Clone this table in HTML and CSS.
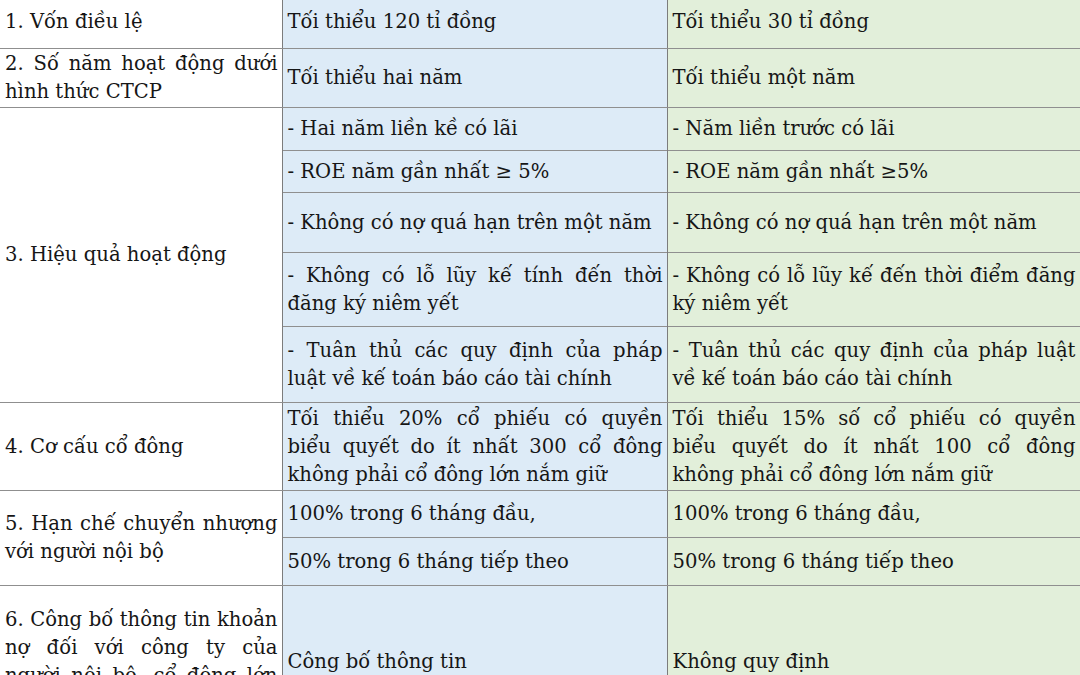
FILE: index.html
```html
<!DOCTYPE html>
<html lang="vi">
<head>
<meta charset="utf-8">
<title>Điều kiện niêm yết</title>
<link rel="stylesheet" href="styles.css">
</head>
<body>
<table class="cmp">
  <colgroup>
    <col class="c1"><col class="c2"><col class="c3">
  </colgroup>
  <tr class="r1">
    <td class="lab">1. Vốn điều lệ</td>
    <td class="hnx">Tối thiểu 120 tỉ đồng</td>
    <td class="upc">Tối thiểu 30 tỉ đồng</td>
  </tr>
  <tr class="r2">
    <td class="lab"><span class="jl">2. Số năm hoạt động dưới</span><span class="ln">hình thức CTCP</span></td>
    <td class="hnx">Tối thiểu hai năm</td>
    <td class="upc">Tối thiểu một năm</td>
  </tr>
  <tr class="r3a sub">
    <td class="lab" rowspan="5">3. Hiệu quả hoạt động</td>
    <td class="hnx">- Hai năm liền kề có lãi</td>
    <td class="upc">- Năm liền trước có lãi</td>
  </tr>
  <tr class="r3b sub">
    <td class="hnx">- ROE năm gần nhất ≥ 5%</td>
    <td class="upc">- ROE năm gần nhất ≥5%</td>
  </tr>
  <tr class="r3c sub">
    <td class="hnx">- Không có nợ quá hạn trên một năm</td>
    <td class="upc">- Không có nợ quá hạn trên một năm</td>
  </tr>
  <tr class="r3d sub">
    <td class="hnx"><span class="jl">- Không có lỗ lũy kế tính đến thời</span><span class="ln">đăng ký niêm yết</span></td>
    <td class="upc"><span class="jl">- Không có lỗ lũy kế đến thời điểm đăng</span><span class="ln">ký niêm yết</span></td>
  </tr>
  <tr class="r3e">
    <td class="hnx"><span class="jl">- Tuân thủ các quy định của pháp</span><span class="ln">luật về kế toán báo cáo tài chính</span></td>
    <td class="upc"><span class="jl">- Tuân thủ các quy định của pháp luật</span><span class="ln">về kế toán báo cáo tài chính</span></td>
  </tr>
  <tr class="r4">
    <td class="lab">4. Cơ cấu cổ đông</td>
    <td class="hnx"><span class="jl">Tối thiểu 20% cổ phiếu có quyền</span><span class="jl">biểu quyết do ít nhất 300 cổ đông</span><span class="ln">không phải cổ đông lớn nắm giữ</span></td>
    <td class="upc"><span class="jl">Tối thiểu 15% số cổ phiếu có quyền</span><span class="jl">biểu quyết do ít nhất 100 cổ đông</span><span class="ln">không phải cổ đông lớn nắm giữ</span></td>
  </tr>
  <tr class="r5a">
    <td class="lab" rowspan="2"><span class="jl">5. Hạn chế chuyển nhượng</span><span class="ln">với người nội bộ</span></td>
    <td class="hnx">100% trong 6 tháng đầu,</td>
    <td class="upc">100% trong 6 tháng đầu,</td>
  </tr>
  <tr class="r5b">
    <td class="hnx">50% trong 6 tháng tiếp theo</td>
    <td class="upc">50% trong 6 tháng tiếp theo</td>
  </tr>
  <tr class="r6">
    <td class="lab"><span class="jl">6. Công bố thông tin khoản</span><span class="jl">nợ đối với công ty của</span><span class="jl">người nội bộ, cổ đông lớn</span><span class="ln">và người có liên quan</span></td>
    <td class="hnx">Công bố thông tin</td>
    <td class="upc">Không quy định</td>
  </tr>
</table>
</body>
</html>
```

FILE: styles.css
```css
html, body {
  margin: 0;
  padding: 0;
  background: #ffffff;
  overflow: hidden;
}

.cmp {
  border-collapse: collapse;
  table-layout: fixed;
  width: 1080px;
  margin-top: -5px;
  font-family: "DejaVu Serif", "Liberation Serif", serif;
  font-size: 19.6px;
  line-height: 28px;
  color: #161616;
}

.c1 { width: 282px; }
.c2 { width: 385px; }
.c3 { width: 413px; }

.cmp td {
  padding: 0 4px 0 5px;
  vertical-align: middle;
  border-top: 1px solid #8f8f8f;
  border-bottom: 1px solid #8f8f8f;
  border-left: 1px solid #7c7c7c;
  border-right: 1px solid #7c7c7c;
  white-space: nowrap;
}

.cmp td.lab {
  border-left: none;
  background: #ffffff;
}

.cmp td.hnx { background: #ddebf7; }
.cmp td.upc { background: #e2efda; }

.cmp tr.sub td.hnx,
.cmp tr.sub td.upc {
  border-bottom: 1px dashed #9a9a9a;
}

.jl {
  display: block;
  white-space: normal;
  word-spacing: -3px;
  text-align: justify;
  text-align-last: justify;
}

.ln {
  display: block;
  text-align: left;
}

.r1 { height: 53px; }
.r2 { height: 59px; }
.r3a { height: 43px; }
.r3b { height: 42px; }
.r3c { height: 60px; }
.r3d { height: 74px; }
.r3e { height: 76px; }
.r4 { height: 88px; }
.r5a { height: 47px; }
.r5b { height: 48px; }
.r6 { height: 152px; }
```
